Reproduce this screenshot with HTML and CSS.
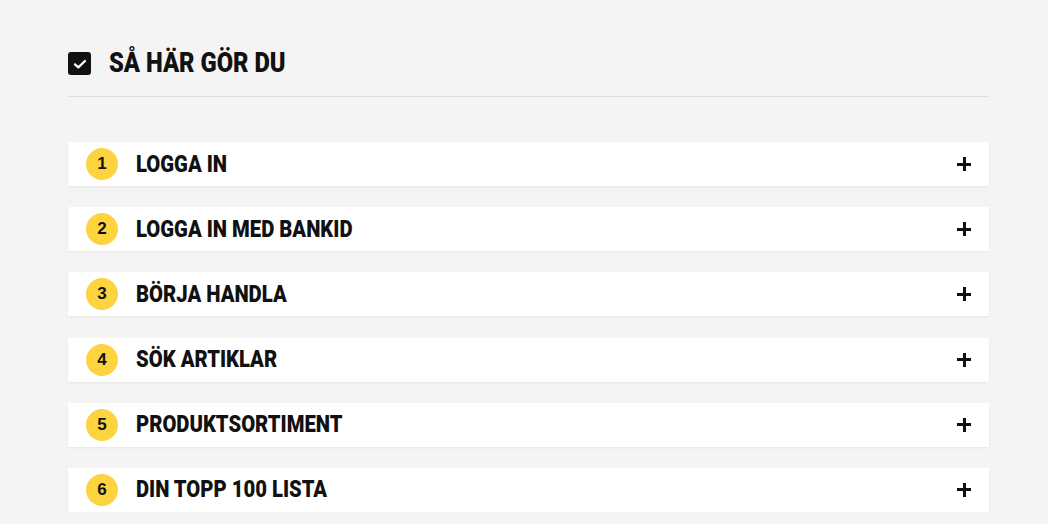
FILE: index.html
```html
<!DOCTYPE html>
<html lang="sv">
<head>
<meta charset="utf-8">
<link rel="stylesheet" href="styles.css">
</head>
<body>
<main class="page">
  <header class="head">
    <span class="check">
      <svg viewBox="0 0 24 24" width="16" height="16"><path d="M4.5 12.5l5 4.5L19.5 7.5" fill="none" stroke="#fff" stroke-width="3.4" stroke-linecap="round" stroke-linejoin="round"/></svg>
    </span>
    <h2 class="title"><span class="narrow">SÅ HÄR GÖR DU</span></h2>
  </header>
  <ul class="steps">
    <li class="step"><span class="num">1</span><span class="label"><span class="narrow">LOGGA IN</span></span><span class="plus"></span></li>
    <li class="step"><span class="num">2</span><span class="label"><span class="narrow">LOGGA IN MED BANKID</span></span><span class="plus"></span></li>
    <li class="step"><span class="num">3</span><span class="label"><span class="narrow">BÖRJA HANDLA</span></span><span class="plus"></span></li>
    <li class="step"><span class="num">4</span><span class="label"><span class="narrow">SÖK ARTIKLAR</span></span><span class="plus"></span></li>
    <li class="step"><span class="num">5</span><span class="label"><span class="narrow">PRODUKTSORTIMENT</span></span><span class="plus"></span></li>
    <li class="step"><span class="num">6</span><span class="label"><span class="narrow">DIN TOPP 100 LISTA</span></span><span class="plus"></span></li>
  </ul>
</main>
</body>
</html>
```

FILE: styles.css
```css
html, body { margin: 0; padding: 0; }
body {
  background: #f4f4f4;
  font-family: "Roboto", "Liberation Sans", sans-serif;
  color: #111;
}
.page {
  width: 921px;
  margin: 0 0 0 68px;
  padding-top: 52px;
}
.head {
  display: flex;
  align-items: center;
  gap: 18px;
  padding-bottom: 21px;
  border-bottom: 1px solid #dcdcdc;
}
.check {
  width: 23px;
  height: 23px;
  background: #111;
  border-radius: 3px;
  display: flex;
  align-items: center;
  justify-content: center;
  flex: none;
}
.narrow {
  display: inline-block;
  transform: scaleX(0.88);
  transform-origin: left center;
  white-space: nowrap;
}
.title {
  margin: 0;
  font-size: 27px;
  line-height: 23px;
  font-weight: 900;
}
.steps {
  list-style: none;
  margin: 45px 0 0;
  padding: 0;
  display: flex;
  flex-direction: column;
  gap: 21.2px;
}
.step {
  height: 44px;
  background: #fff;
  box-shadow: 0 1px 2px rgba(0,0,0,0.06);
  display: flex;
  align-items: center;
  padding: 0 18px;
}
.num {
  width: 32px;
  height: 32px;
  border-radius: 50%;
  background: #fdd440;
  display: flex;
  align-items: center;
  justify-content: center;
  font-family: "Liberation Sans", sans-serif;
  font-weight: 700;
  font-size: 17px;
  color: #111;
  flex: none;
}
.label {
  margin-left: 18px;
  font-size: 23px;
  font-weight: 900;
  flex: 1;
}
.plus {
  position: relative;
  width: 14px;
  height: 14px;
  flex: none;
}
.plus::before, .plus::after {
  content: "";
  position: absolute;
  background: #111;
}
.plus::before { left: 0; top: 5.5px; width: 14px; height: 3px; }
.plus::after { left: 5.5px; top: 0; width: 3px; height: 14px; }
```
